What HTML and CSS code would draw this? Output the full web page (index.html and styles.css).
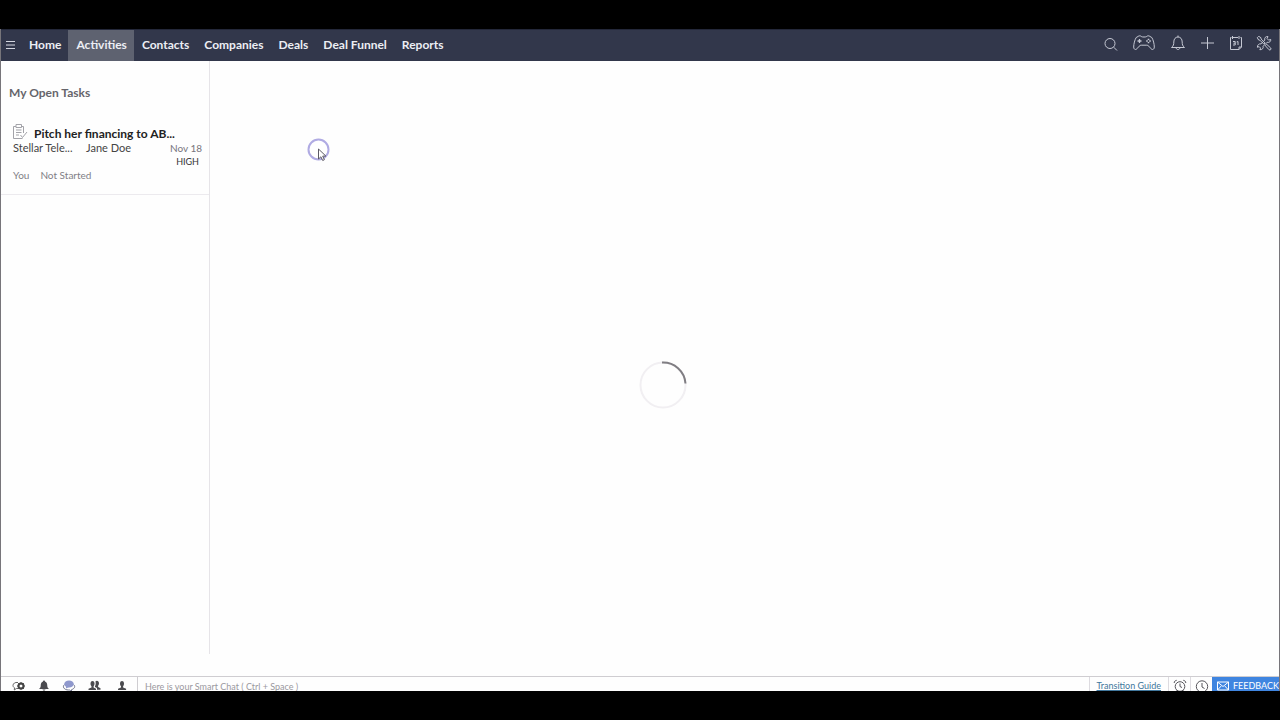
FILE: index.html
```html
<!DOCTYPE html>
<html lang="en">
<head>
    <meta charset="UTF-8">
    <meta name="viewport" content="width=device-width, initial-scale=1.0">
    <title>My Open Tasks</title>
    <link rel="stylesheet" href="styles.css">
</head>
<body>
    <div class="app">
        <header class="topbar">
            <button class="menu-btn" type="button" aria-label="Menu">
                <svg width="9" height="8" viewBox="0 0 9 8" stroke="#d4d6df"><path d="M0 .5h9M0 4h9M0 7.500h9"/></svg>
            </button>
            <nav class="nav">
                <a href="#">Home</a>
                <a href="#" class="active">Activities</a>
                <a href="#">Contacts</a>
                <a href="#">Companies</a>
                <a href="#">Deals</a>
                <a href="#">Deal Funnel</a>
                <a href="#">Reports</a>
            </nav>
            <div class="tools">
                <button type="button" aria-label="Search">
                    <svg width="16" height="16" viewBox="0 0 16 16"><circle cx="8" cy="7.500" r="5"/><path d="M11.700 11.200l3.300 3.300"/></svg>
                </button>
                <button type="button" aria-label="Games">
                    <svg width="24" height="18" viewBox="0 0 24 18"><path d="M6 1.500c1-.9 2.500-.9 3.300 0 .6.700 4.800.7 5.400 0 .8-.9 2.300-.9 3.300 0l1.800 1c1.500 2.500 2.500 6.500 2.500 9.500 0 2.800-2.500 3.300-3.700 1.200l-1.800-2c-.6-.8-1.200-1-2-1H9.200c-.8 0-1.400.2-2 1l-1.800 2C4.200 15.300 1.700 14.800 1.700 12c0-3 1-7 2.500-9.500z"/><path d="M7.500 4v4M5.500 6h4M14.200 6h1.600M17.200 6h1.600M15.700 4.300h1.600M15.700 7.700h1.600" stroke-width="1.300"/></svg>
                </button>
                <button type="button" aria-label="Notifications">
                    <svg width="16" height="18" viewBox="0 0 16 18"><path d="M8 .5V2M1.500 12.500c2-1.700 2.300-3 2.300-5.500 0-3 1.700-5 4.200-5s4.200 2 4.200 5c0 2.500.3 3.800 2.300 5.500zM6.200 13c.2 2 3.400 2 3.600 0"/></svg>
                </button>
                <button type="button" aria-label="Add">
                    <svg width="14" height="16" viewBox="0 0 14 16"><path d="M7.500 1v12M1 7h13"/></svg>
                </button>
                <button type="button" aria-label="Calendar">
                    <svg width="14" height="16" viewBox="0 0 14 16"><path d="M5 1.500h5M3.500 1.500h-1v12H11l2.500-2.500V1.500h-1M4.500 0v3M11 0v3M11 13.500V11h2.500"/><path d="M5 5.500h2.200V9H5M5.500 7.200h1.700M8.700 6l1.300-.5V9"/></svg>
                </button>
                <button type="button" aria-label="Setup">
                    <svg width="16" height="16" viewBox="0 0 16 16"><path d="M1.300 1.700L2.700.3l2.200 1.400.2 1.300 4 4-1.200 1.200-4-4-1.300-.2zM9.300 9.700l1.400-1.400 4 3.700c1 1.200-.6 2.700-1.700 1.700zM14.700 3.400l-2 .8-1.600-1.600.9-2c-2.300-.5-3.900 1.400-3.200 3.500L5 7.900C3 7.400 1.200 9 1.400 11.300l1.700-.7 1.500 1.500-.8 1.600c2.300.3 3.900-1.500 3.300-3.400l4-4c2.200.6 4-.9 3.600-2.900z"/></svg>
                </button>
            </div>
        </header>

        <main class="content">
            <aside class="sidebar">
                <h1>My Open Tasks</h1>
                <article class="task">
                    <div class="task-title">
                        <svg width="16" height="17" viewBox="0 0 16 17" fill="none" stroke="#a3a3a9"><path d="M3 3.500H.5v12h9M8.500 3.500h2V10M3 1.500h5.500v3H3zM3 7h5.500M3 9.500h5.500M3 12h3M7.500 12l2 2.500L14 9"/></svg>
                        <h2>Pitch her financing to AB...</h2>
                    </div>
                    <div class="task-row">
                        <span class="company">Stellar Tele...</span>
                        <span>Jane Doe</span>
                        <time class="due">Nov 18</time>
                    </div>
                    <div class="priority">HIGH</div>
                    <div class="task-meta"><span>You</span><span>Not Started</span></div>
                </article>
            </aside>
            <section class="detail" aria-label="Task details">
                <svg class="spinner" width="48" height="48" viewBox="0 0 48 48" fill="none" role="img" aria-label="Loading">
                    <circle cx="24" cy="24" r="22.500" stroke="#f1eff2" stroke-width="2"/>
                    <path d="M23 1.500A22.500 22.500 0 0 1 46.500 22.500" stroke="#807e83" stroke-width="2"/>
                </svg>
            </section>
        </main>

        <footer class="chatbar">
            <div class="chat-tools">
                <button type="button" aria-label="Chat settings">
                    <svg width="14" height="12" viewBox="0 0 14 12"><path d="M6 2.500C3 2 1 3.500 1 5.500c0 1 .6 1.800 1.500 2.300L2.300 10l2-1.500H6" fill="none" stroke="#666"/><circle cx="9" cy="6" r="2.500" fill="none" stroke="#444" stroke-width="2"/><path d="M9 2v8M5 6h8M6.200 3.200l5.600 5.600M11.800 3.200L6.200 8.800" stroke="#444"/><circle cx="9" cy="6" r="1.300" fill="#fff"/></svg>
                </button>
                <button type="button" aria-label="Alerts">
                    <svg width="12" height="12" viewBox="0 0 12 12" fill="#4b4b4f"><path d="M5 1.500c0-1.300 2-1.300 2 0 2 .8 2.200 2.500 2.300 4.500.1 1.500.7 2.300 1.900 3H.8c1.200-.7 1.800-1.500 1.900-3 .1-2 .3-3.700 2.300-4.500zM4.500 9.500h3c-.3 1.500-2.700 1.500-3 0z"/></svg>
                </button>
                <button type="button" aria-label="Chats">
                    <svg width="14" height="12" viewBox="0 0 14 12"><path d="M2.500 4.500C0 6.500 2 10 6.500 10h1l2 1.500V9.700C13 8.500 13.500 6 11.500 4.500" fill="#fff" stroke="#70748c"/><ellipse cx="7" cy="4" rx="4.800" ry="3.500" fill="#8f98cd"/><path d="M4 6v2.500L7 7z" fill="#8f98cd"/></svg>
                </button>
                <button type="button" aria-label="Groups">
                    <svg width="14" height="12" viewBox="0 0 14 12" fill="#4b4b4f"><path d="M2.500 3.500c0-3.300 4-3.300 4 0 0 1.500-.5 2-.9 2.700v1.300l2.400 1.200V10H.5V8.700l3-1.200V6.200C3 5.500 2.500 5 2.500 3.500zM7.500 1.200c1.500-1.200 3.500-.3 3.500 2 0 1.300-.5 2-.9 2.500V7l2.400 1.200v1.600H9V8L7 7V6c.7-.8.9-3 .5-4.800z"/></svg>
                </button>
                <button type="button" aria-label="Contacts">
                    <svg width="14" height="12" viewBox="0 0 14 12" fill="#4b4b4f"><path d="M6 3.500c0-3.300 4-3.300 4 0 0 1.500-.5 2-.9 2.700v1.300l3 1.200V10H4V8.700l3-1.200V6.200C6.500 5.500 6 5 6 3.500z"/></svg>
                </button>
            </div>
            <input class="chat-input" type="text" aria-label="Smart Chat" placeholder="Here is your Smart Chat ( Ctrl + Space )">
            <div class="cell guide"><a href="#">Transition Guide</a></div>
            <button class="cell clock" type="button" aria-label="Reminders">
                <svg width="14" height="14" viewBox="0 0 14 14"><circle cx="7" cy="7.500" r="4.800"/><path d="M7 4.500v3l2 1M1.200 4c0-1.600 1-2.500 2.500-2.700M12.800 4c0-1.600-1-2.500-2.500-2.700M3.500 11.500L2 13M10.500 11.500L12 13"/></svg>
            </button>
            <button class="cell clock" type="button" aria-label="Recent items">
                <svg width="14" height="14" viewBox="0 0 14 14"><circle cx="7" cy="7.500" r="5.700"/><path d="M7 4v4l2.500 1.500"/></svg>
            </button>
            <button class="feedback" type="button">
                <svg width="12" height="10" viewBox="0 0 12 10" fill="none" stroke="#fff"><path d="M.5 1h11v8H.5zM.5 1L6 5.500 11.500 1M.5 9l3.700-4M11.500 9L7.800 5"/></svg>
                FEEDBACK
            </button>
        </footer>
    </div>

    <svg class="pointer" width="26" height="26" viewBox="0 0 26 26" aria-hidden="true">
        <circle cx="12.500" cy="12.500" r="10" fill="#fff" stroke="#b0abe3" stroke-width="2"/>
        <path d="M12.500 12v10l2.400-2.200 1.800 3.700 1.700-.8-1.700-3.600h3.200z" fill="#fff" stroke="#5c5a66"/>
    </svg>
</body>
</html>
```
FILE: styles.css
```css
* {
    box-sizing: border-box;
}
body {
    margin: 0;
    height: 100vh;
    padding: 29px 0;
    background: #000;
    font-family: Lato, "Liberation Sans", sans-serif;
    font-size: 11px;
    color: #444;
}
button {
    padding: 0;
    border: 0;
    background: none;
    font: inherit;
    color: inherit;
}
svg {
    display: block;
}
.app {
    display: flex;
    flex-direction: column;
    height: 100%;
    background: #fefefe;
    border: solid #77757a;
    border-width: 0 1px;
}

/* top bar */
.topbar {
    display: flex;
    flex: none;
    height: 32px;
    background: #32374b;
    border-top: 1px solid #24283a;
}
.menu-btn {
    padding: 0 6px 2px 5px;
}
.nav {
    display: flex;
}
.nav a {
    display: flex;
    align-items: center;
    padding: 0 7px 3px 8px;
    color: #eceef4;
    font-size: 12px;
    font-weight: 700;
    text-decoration: none;
}
.nav .active {
    background: #5e6270;
}
.tools {
    display: flex;
    align-items: center;
    gap: 14px;
    margin-left: auto;
    padding: 0 7px 3px 0;
}
.tools svg {
    fill: none;
    stroke: #c5c8d3;
}

/* tasks */
.content {
    display: flex;
    flex: 1;
    min-height: 0;
    padding-bottom: 22px;
}
.sidebar {
    width: 209px;
    flex: none;
    border-right: 1px solid #e6e4e8;
}
.sidebar h1 {
    margin: 0;
    padding: 24px 8px 22px;
    font-size: 12px;
    line-height: 16px;
    font-weight: 700;
    color: #66656b;
}
.task {
    padding: 0 7px 12px 12px;
    border-bottom: 1px solid #eceaee;
}
.task-title {
    display: flex;
    gap: 5px;
    height: 18px;
}
.task-title h2 {
    margin: 0;
    padding-top: 4px;
    font-size: 12px;
    line-height: 14px;
    font-weight: 700;
    color: #222;
}
.task-row {
    display: flex;
    line-height: 14px;
}
.company {
    width: 73px;
}
.due {
    margin-left: auto;
    font-size: 10px;
    color: #77757c;
}
.priority {
    padding-right: 3px;
    font-size: 9px;
    line-height: 13px;
    text-align: right;
    color: #333;
}
.task-meta {
    display: flex;
    gap: 11px;
    font-size: 10px;
    line-height: 14px;
    color: #818086;
}
.detail {
    display: flex;
    flex: 1;
    align-items: center;
    justify-content: center;
    padding: 55px 164px 0 0;
}

/* chat bar */
.chatbar {
    display: flex;
    flex: none;
    height: 15px;
    overflow: hidden;
    border-top: 1px solid #cfcdd1;
}
.chat-tools {
    display: flex;
    gap: 12px;
    padding: 3px 9px 0 11px;
    border-right: 1px solid #cfcdd1;
}
.chat-input {
    flex: 1;
    min-width: 0;
    height: 18px;
    padding: 0 7px;
    border: 0;
    outline: 0;
    background: none;
    font: 9px Lato, "Liberation Sans", sans-serif;
}
.chat-input::placeholder {
    color: #9b999f;
}
.cell {
    height: 18px;
    border-left: 1px solid #dddbe0;
}
.guide {
    padding: 0 7px;
    font-size: 9px;
    line-height: 18px;
}
.guide a {
    color: #41779c;
}
.clock {
    padding: 0 3px 0 4px;
}
.clock svg {
    fill: none;
    stroke: #55545a;
}
.feedback {
    display: flex;
    align-items: center;
    gap: 4px;
    height: 17px;
    padding: 0 0 0 5px;
    background: #3f85e0;
    color: #fff;
    font-size: 9px;
}

.pointer {
    position: absolute;
    left: 306px;
    top: 137px;
}
```
